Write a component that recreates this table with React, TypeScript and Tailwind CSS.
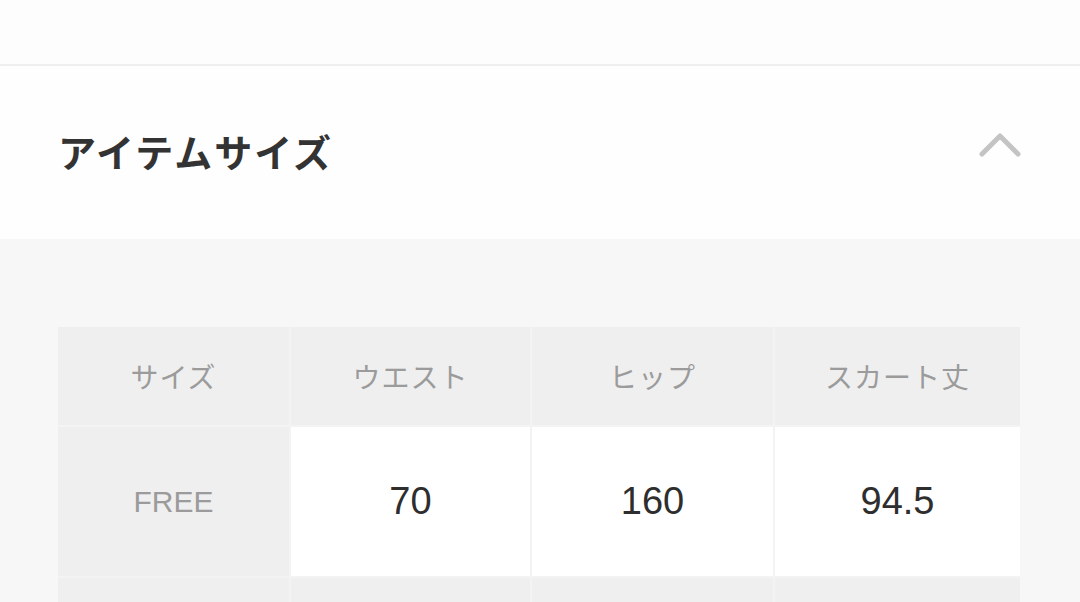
import React from "react";

const jp = { fontFamily: '"Noto Sans CJK JP", "Noto Sans", sans-serif' };
const num = { fontFamily: '"Liberation Sans", "Noto Sans CJK JP", sans-serif' };

const headers = ["サイズ", "ウエスト", "ヒップ", "スカート丈"];
const rows = [["FREE", "70", "160", "94.5"]];

const ChevronUp = () => (
  <svg width="42" height="26" viewBox="0 0 42 26" fill="none">
    <path
      d="M3 21 L21 3 L39 21"
      stroke="#c4c4c4"
      strokeWidth="5"
      strokeLinecap="round"
      strokeLinejoin="round"
    />
  </svg>
);

const App = () => {
  return (
    <div className="w-[1080px] h-[602px] overflow-hidden bg-[#fdfdfd] flex flex-col">
      <div className="h-[64px] shrink-0 bg-[#fdfdfd]" />
      <div className="h-[2px] shrink-0 bg-[#efefef]" />

      {/* section header */}
      <div className="h-[173px] shrink-0 flex items-center justify-between pl-[58px] pr-[59px] bg-[#fefefe]">
        <p className="-mt-[4px] text-[38px] font-bold text-[#333333] leading-none tracking-[2px]" style={jp}>
          アイテムサイズ
        </p>
        <div className="-mt-[13px]">
          <ChevronUp />
        </div>
      </div>

      {/* size table */}
      <div className="flex-1 bg-[#f7f7f7] pt-[88px] pl-[58px] pr-[60px]">
        <div className="grid grid-cols-[231px_239px_241px_1fr] gap-[2px] bg-[#f3f3f3]">
          {headers.map((h) => (
            <div
              key={h}
              className="h-[98px] flex items-center justify-center bg-[#efefef] text-[28px] text-[#9b9b9b] tracking-[1px]"
              style={jp}
            >
              {h}
            </div>
          ))}
          {rows.map((r) =>
            r.map((v, i) =>
              i === 0 ? (
                <div
                  key={v}
                  className="h-[149px] flex items-center justify-center bg-[#efefef] text-[30px] text-[#9b9b9b]"
                  style={num}
                >
                  {v}
                </div>
              ) : (
                <div
                  key={i}
                  className="h-[149px] flex items-center justify-center bg-white text-[38px] text-[#2e2e2e]"
                  style={num}
                >
                  {v}
                </div>
              )
            )
          )}
          {headers.map((h) => (
            <div key={"r3" + h} className="h-[98px] bg-[#efefef]" />
          ))}
        </div>
      </div>
    </div>
  );
};

export default App;
